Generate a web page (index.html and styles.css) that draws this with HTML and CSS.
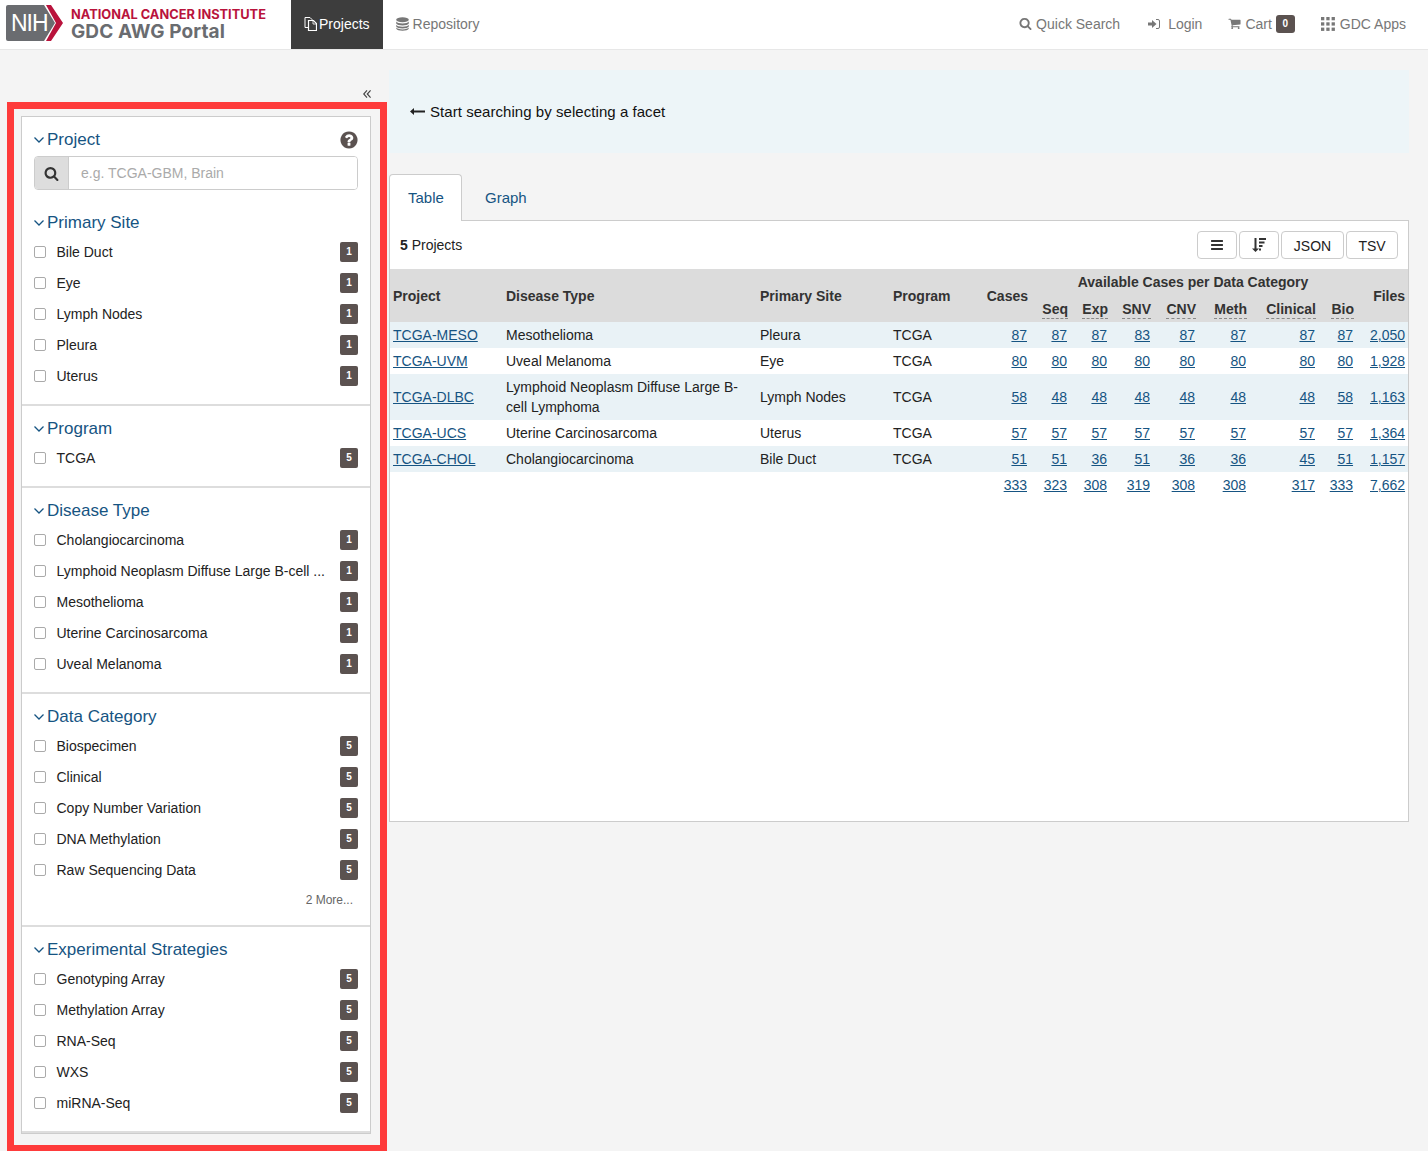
FILE: index.html
```html
<!DOCTYPE html>
<html lang="en">
<head>
  <meta charset="UTF-8">
  <title>GDC AWG Portal</title>
  <link rel="stylesheet" href="styles.css">
</head>
<body>
  <header class="topbar">
    <a class="brand">
      <svg class="brand-mark" viewBox="0 0 58 36" width="58" height="36">
        <path d="M2 0H38L49 18L38 36H2Q0 36 0 34V2Q0 0 2 0Z" fill="#6a6c70"/>
        <path d="M40 0H45L57 18L45 36H40L50 18Z" fill="#b9133c"/>
        <text x="5" y="26" class="brand-nih">NIH</text>
      </svg>
      <span class="brand-text">
        <span class="brand-top">NATIONAL CANCER INSTITUTE</span>
        <span class="brand-bottom">GDC AWG Portal</span>
      </span>
    </a>
    <nav class="nav-left">
      <a class="nav-item active">
        <svg class="icon" viewBox="0 0 13 14" width="13" height="14"><path d="M1 .5H6L8 2.500V3M1 .5V10.500H4" fill="none" stroke="currentColor"/><path d="M4.500 3.500H9.500L12.500 6.500V13.500H4.500Z" fill="none" stroke="currentColor" stroke-width="1.200"/><path d="M9 3.500V7H12.500" fill="none" stroke="currentColor" stroke-width=".8"/></svg>
        Projects
      </a>
      <a class="nav-item">
        <svg class="icon" viewBox="0 0 13 14" width="13" height="14" fill="currentColor"><ellipse cx="6.500" cy="2.800" rx="6.300" ry="2.500"/><path d="M.2 4.500C1 7 12 7 12.800 4.500V6.500C12 9 1 9 .2 6.500Z"/><path d="M.2 7.800C1 10.300 12 10.300 12.800 7.800V9.500C12 12 1 12 .2 9.500Z"/><path d="M.2 10.600C1 13 12 13 12.800 10.600V11.500C12 14.500 1 14.500 .2 11.500Z"/></svg>
        Repository
      </a>
    </nav>
    <nav class="nav-right">
      <a class="nav-link link-search">
        <svg class="icon" viewBox="0 0 1792 1792" width="13" height="13" fill="currentColor"><path d="M1216 832q0-185-131.500-316.500t-316.500-131.500-316.500 131.500-131.500 316.500 131.500 316.500 316.500 131.500 316.500-131.500 131.500-316.500zm512 832q0 52-38 90t-90 38q-54 0-90-38l-343-342q-179 124-399 124-143 0-273.500-55.500t-225-150-150-225-55.500-273.500 55.500-273.500 150-225 225-150 273.500-55.500 273.500 55.500 225 150 150 225 55.500 273.500q0 220-124 399l343 343q37 37 37 90z"/></svg>
        Quick Search
      </a>
      <a class="nav-link link-login">
        <svg class="icon" viewBox="0 0 12 10" width="12" height="10"><path d="M0 3.500H4V1L8.500 5L4 9V6.500H0Z" fill="currentColor"/><path d="M8 .5H10Q11.500 .5 11.500 2V8Q11.500 9.500 10 9.500H8" fill="none" stroke="currentColor"/></svg>
        Login
      </a>
      <a class="nav-link link-cart">
        <svg class="icon" viewBox="0 0 1792 1792" width="13" height="13" fill="currentColor"><path d="M704 1536q0 52-38 90t-90 38-90-38-38-90 38-90 90-38 90 38 38 90zm896 0q0 52-38 90t-90 38-90-38-38-90 38-90 90-38 90 38 38 90zm128-1088v512q0 24-16.500 42.500t-40.500 21.500l-1044 122q13 60 13 70 0 16-24 64h920q26 0 45 19t19 45-19 45-45 19h-1024q-26 0-45-19t-19-45q0-11 8-31.500t16-36 21.500-40 15.500-29.500l-177-823h-204q-26 0-45-19t-19-45 19-45 45-19h256q16 0 28.500 6.500t19.500 15.500 13 24.500 8 26 5.500 29.500 4.500 26h1201q26 0 45 19t19 45z"/></svg>
        Cart <span class="cart-count">0</span>
      </a>
      <a class="nav-link link-apps">
        <svg class="icon" viewBox="0 0 14 14" width="14" height="14" fill="currentColor"><rect width="3.300" height="3.300"/><rect x="5.300" width="3.300" height="3.300"/><rect x="10.600" width="3.300" height="3.300"/><rect y="5.300" width="3.300" height="3.300"/><rect x="5.300" y="5.300" width="3.300" height="3.300"/><rect x="10.600" y="5.300" width="3.300" height="3.300"/><rect y="10.600" width="3.300" height="3.300"/><rect x="5.300" y="10.600" width="3.300" height="3.300"/><rect x="10.600" y="10.600" width="3.300" height="3.300"/></svg>
        GDC Apps
      </a>
    </nav>
  </header>

  <div class="page">
    <aside class="sidebar">
      <div class="collapse-row">
        <svg viewBox="0 0 8 8" width="8" height="8" fill="none" stroke="#444" stroke-width="1.200"><path d="M4 .4L.7 4L4 7.600M7.600 .4L4.300 4L7.600 7.600"/></svg>
      </div>
      <div class="facet-box">
        <div class="facet-panel">
          <section class="facet facet-project">
            <h4 class="facet-title">
              <svg class="chevron" viewBox="0 0 10 6" width="10" height="6"><path d="M.5 .5L5 5L9.500 .5"/></svg>Project
              <svg class="help" viewBox="0 0 1792 1792" width="20" height="20" fill="#5b5250"><path d="M1024 1376v-192q0-14-9-23t-23-9h-192q-14 0-23 9t-9 23v192q0 14 9 23t23 9h192q14 0 23-9t9-23zm256-672q0-88-55.500-163t-138.500-116-170-41q-243 0-371 213-15 24 8 42l132 100q7 6 19 6 16 0 25-12 53-68 86-92 34-24 86-24 48 0 85.500 26t37.500 59q0 38-20 61t-68 45q-63 28-115.500 86.500t-52.500 125.500v36q0 14 9 23t23 9h192q14 0 23-9t9-23q0-19 21.500-49.500t54.500-49.500q32-18 49-28.500t46-35 44.500-48 28-60.500 12.500-81zm384 192q0 209-103 385.500t-279.500 279.500-385.500 103-385.500-103-279.500-279.500-103-385.500 103-385.500 279.500-279.500 385.500-103 385.500 103 279.500 279.500 103 385.500z"/></svg>
            </h4>
            <div class="search-group">
              <span class="search-addon">
                <svg viewBox="0 0 1792 1792" width="15" height="15" fill="#333"><path d="M1216 832q0-185-131.500-316.500t-316.500-131.500-316.500 131.500-131.500 316.500 131.500 316.500 316.500 131.500 316.500-131.500 131.500-316.500zm512 832q0 52-38 90t-90 38q-54 0-90-38l-343-342q-179 124-399 124-143 0-273.500-55.500t-225-150-150-225-55.500-273.500 55.500-273.500 150-225 225-150 273.500-55.500 273.500 55.500 225 150 150 225 55.500 273.500q0 220-124 399l343 343q37 37 37 90z"/></svg>
              </span>
              <input class="search-input" type="text" placeholder="e.g. TCGA-GBM, Brain">
            </div>
          </section>

          <section class="facet facet-first">
            <h4 class="facet-title"><svg class="chevron" viewBox="0 0 10 6" width="10" height="6"><path d="M.5 .5L5 5L9.500 .5"/></svg>Primary Site</h4>
            <label class="term"><input type="checkbox"><span class="term-name">Bile Duct</span><span class="count">1</span></label>
            <label class="term"><input type="checkbox"><span class="term-name">Eye</span><span class="count">1</span></label>
            <label class="term"><input type="checkbox"><span class="term-name">Lymph Nodes</span><span class="count">1</span></label>
            <label class="term"><input type="checkbox"><span class="term-name">Pleura</span><span class="count">1</span></label>
            <label class="term"><input type="checkbox"><span class="term-name">Uterus</span><span class="count">1</span></label>
          </section>

          <section class="facet">
            <h4 class="facet-title"><svg class="chevron" viewBox="0 0 10 6" width="10" height="6"><path d="M.5 .5L5 5L9.500 .5"/></svg>Program</h4>
            <label class="term"><input type="checkbox"><span class="term-name">TCGA</span><span class="count">5</span></label>
          </section>

          <section class="facet">
            <h4 class="facet-title"><svg class="chevron" viewBox="0 0 10 6" width="10" height="6"><path d="M.5 .5L5 5L9.500 .5"/></svg>Disease Type</h4>
            <label class="term"><input type="checkbox"><span class="term-name">Cholangiocarcinoma</span><span class="count">1</span></label>
            <label class="term"><input type="checkbox"><span class="term-name">Lymphoid Neoplasm Diffuse Large B-cell ...</span><span class="count">1</span></label>
            <label class="term"><input type="checkbox"><span class="term-name">Mesothelioma</span><span class="count">1</span></label>
            <label class="term"><input type="checkbox"><span class="term-name">Uterine Carcinosarcoma</span><span class="count">1</span></label>
            <label class="term"><input type="checkbox"><span class="term-name">Uveal Melanoma</span><span class="count">1</span></label>
          </section>

          <section class="facet">
            <h4 class="facet-title"><svg class="chevron" viewBox="0 0 10 6" width="10" height="6"><path d="M.5 .5L5 5L9.500 .5"/></svg>Data Category</h4>
            <label class="term"><input type="checkbox"><span class="term-name">Biospecimen</span><span class="count">5</span></label>
            <label class="term"><input type="checkbox"><span class="term-name">Clinical</span><span class="count">5</span></label>
            <label class="term"><input type="checkbox"><span class="term-name">Copy Number Variation</span><span class="count">5</span></label>
            <label class="term"><input type="checkbox"><span class="term-name">DNA Methylation</span><span class="count">5</span></label>
            <label class="term"><input type="checkbox"><span class="term-name">Raw Sequencing Data</span><span class="count">5</span></label>
            <div class="more">2 More...</div>
          </section>

          <section class="facet">
            <h4 class="facet-title"><svg class="chevron" viewBox="0 0 10 6" width="10" height="6"><path d="M.5 .5L5 5L9.500 .5"/></svg>Experimental Strategies</h4>
            <label class="term"><input type="checkbox"><span class="term-name">Genotyping Array</span><span class="count">5</span></label>
            <label class="term"><input type="checkbox"><span class="term-name">Methylation Array</span><span class="count">5</span></label>
            <label class="term"><input type="checkbox"><span class="term-name">RNA-Seq</span><span class="count">5</span></label>
            <label class="term"><input type="checkbox"><span class="term-name">WXS</span><span class="count">5</span></label>
            <label class="term"><input type="checkbox"><span class="term-name">miRNA-Seq</span><span class="count">5</span></label>
          </section>
        </div>
      </div>
    </aside>

    <main class="content">
      <div class="notice">
        <svg viewBox="0 0 15 7" width="15" height="7"><path d="M4 0V2.500H15V4.500H4V7L0 3.500Z" fill="#222"/></svg>
        Start searching by selecting a facet
      </div>

      <div class="tabs">
        <a class="tab active">Table</a>
        <a class="tab">Graph</a>
      </div>

      <div class="tab-pane">
        <div class="toolbar">
          <span class="total"><strong>5</strong> Projects</span>
          <div class="tool-buttons">
            <button class="btn btn-icon">
              <svg viewBox="0 0 1792 1792" width="14" height="14" fill="#333"><path d="M1664 1344v128q0 26-19 45t-45 19h-1408q-26 0-45-19t-19-45v-128q0-26 19-45t45-19h1408q26 0 45 19t19 45zm0-512v128q0 26-19 45t-45 19h-1408q-26 0-45-19t-19-45v-128q0-26 19-45t45-19h1408q26 0 45 19t19 45zm0-512v128q0 26-19 45t-45 19h-1408q-26 0-45-19t-19-45v-128q0-26 19-45t45-19h1408q26 0 45 19t19 45z"/></svg>
            </button>
            <button class="btn btn-icon">
              <svg viewBox="0 0 14 14" width="14" height="14" fill="#333"><path d="M2.500 0H4.500V10.500H7L3.500 14L0 10.500H2.500Z"/><rect x="7" width="7" height="2"/><rect x="7" y="3.500" width="5.500" height="2"/><rect x="7" y="7" width="3.500" height="2"/><rect x="7" y="10.500" width="2" height="2"/></svg>
            </button>
            <button class="btn btn-json">JSON</button>
            <button class="btn btn-tsv">TSV</button>
          </div>
        </div>

        <table class="projects">
          <colgroup>
            <col class="c-project"><col class="c-disease"><col class="c-site"><col class="c-program"><col class="c-cases">
            <col class="c-seq"><col class="c-exp"><col class="c-snv"><col class="c-cnv"><col class="c-meth"><col class="c-clinical"><col class="c-bio"><col class="c-files">
          </colgroup>
          <thead>
            <tr class="head-top">
              <th rowspan="2">Project</th>
              <th rowspan="2">Disease Type</th>
              <th rowspan="2">Primary Site</th>
              <th rowspan="2">Program</th>
              <th rowspan="2" class="num">Cases</th>
              <th colspan="7" class="group">Available Cases per Data Category</th>
              <th rowspan="2" class="num">Files</th>
            </tr>
            <tr class="head-sub">
              <th class="num"><span>Seq</span></th>
              <th class="num"><span>Exp</span></th>
              <th class="num"><span>SNV</span></th>
              <th class="num"><span>CNV</span></th>
              <th class="num"><span>Meth</span></th>
              <th class="num"><span>Clinical</span></th>
              <th class="num"><span>Bio</span></th>
            </tr>
          </thead>
          <tbody>
            <tr class="odd">
              <td><a>TCGA-MESO</a></td><td>Mesothelioma</td><td>Pleura</td><td>TCGA</td>
              <td class="num"><a>87</a></td><td class="num"><a>87</a></td><td class="num"><a>87</a></td><td class="num"><a>83</a></td><td class="num"><a>87</a></td><td class="num"><a>87</a></td><td class="num"><a>87</a></td><td class="num"><a>87</a></td><td class="num"><a>2,050</a></td>
            </tr>
            <tr>
              <td><a>TCGA-UVM</a></td><td>Uveal Melanoma</td><td>Eye</td><td>TCGA</td>
              <td class="num"><a>80</a></td><td class="num"><a>80</a></td><td class="num"><a>80</a></td><td class="num"><a>80</a></td><td class="num"><a>80</a></td><td class="num"><a>80</a></td><td class="num"><a>80</a></td><td class="num"><a>80</a></td><td class="num"><a>1,928</a></td>
            </tr>
            <tr class="odd">
              <td><a>TCGA-DLBC</a></td><td>Lymphoid Neoplasm Diffuse Large B-cell Lymphoma</td><td>Lymph Nodes</td><td>TCGA</td>
              <td class="num"><a>58</a></td><td class="num"><a>48</a></td><td class="num"><a>48</a></td><td class="num"><a>48</a></td><td class="num"><a>48</a></td><td class="num"><a>48</a></td><td class="num"><a>48</a></td><td class="num"><a>58</a></td><td class="num"><a>1,163</a></td>
            </tr>
            <tr>
              <td><a>TCGA-UCS</a></td><td>Uterine Carcinosarcoma</td><td>Uterus</td><td>TCGA</td>
              <td class="num"><a>57</a></td><td class="num"><a>57</a></td><td class="num"><a>57</a></td><td class="num"><a>57</a></td><td class="num"><a>57</a></td><td class="num"><a>57</a></td><td class="num"><a>57</a></td><td class="num"><a>57</a></td><td class="num"><a>1,364</a></td>
            </tr>
            <tr class="odd">
              <td><a>TCGA-CHOL</a></td><td>Cholangiocarcinoma</td><td>Bile Duct</td><td>TCGA</td>
              <td class="num"><a>51</a></td><td class="num"><a>51</a></td><td class="num"><a>36</a></td><td class="num"><a>51</a></td><td class="num"><a>36</a></td><td class="num"><a>36</a></td><td class="num"><a>45</a></td><td class="num"><a>51</a></td><td class="num"><a>1,157</a></td>
            </tr>
            <tr>
              <td colspan="4"></td>
              <td class="num"><a>333</a></td><td class="num"><a>323</a></td><td class="num"><a>308</a></td><td class="num"><a>319</a></td><td class="num"><a>308</a></td><td class="num"><a>308</a></td><td class="num"><a>317</a></td><td class="num"><a>333</a></td><td class="num"><a>7,662</a></td>
            </tr>
          </tbody>
        </table>
      </div>
    </main>
  </div>
</body>
</html>
```

FILE: styles.css
```css
* { box-sizing: border-box; }
html, body { margin: 0; padding: 0; }
body { background: #f4f4f4; color: #222; font-family: "Liberation Sans", Arial, sans-serif; font-size: 14px; line-height: 20px; overflow-x: hidden; }

/* top bar */
.topbar { display: flex; align-items: stretch; height: 50px; background: #fff; border-bottom: 1px solid #e7e7e7; }
.brand { display: flex; width: 291px; padding: 5px 0 0 6px; }
.brand-mark { flex: none; }
.brand-nih { font-family: "Liberation Sans", Arial, sans-serif; font-size: 23px; fill: #fff; letter-spacing: -1px; }
.brand-text { display: flex; flex-direction: column; margin-left: 7px; }
.brand-top { font-family: Inter, sans-serif; font-weight: 700; font-size: 12.800px; line-height: 12px; margin-top: 4px; color: #b9133c; white-space: nowrap; }
.brand-bottom { font-family: Inter, sans-serif; font-weight: 700; font-size: 19px; line-height: 22px; letter-spacing: .1px; color: #6a6c70; white-space: nowrap; }
.nav-left { display: flex; height: 49px; }
.nav-item { display: flex; align-items: center; gap: 4px; padding: 0 13px 2px; color: #777; }
.nav-item.active { gap: 2px; background: #3d3d3d; color: #fff; }
.nav-right { display: flex; align-items: center; margin-left: auto; padding: 0 22px 2px 0; color: #777; }
.nav-link { display: flex; align-items: center; }
.link-search { gap: 4px; margin-right: 28px; }
.link-login { gap: 8px; margin-right: 26px; }
.link-cart { gap: 4px; margin-right: 26px; }
.link-apps { gap: 5px; }
.cart-count { width: 19px; height: 18px; background: #5b5250; color: #fff; border-radius: 3px; font-size: 10px; font-weight: 700; line-height: 18px; text-align: center; }

/* sidebar */
.page { display: flex; align-items: flex-start; padding-left: 7px; }
.sidebar { width: 380px; flex: none; }
.collapse-row { display: flex; justify-content: flex-end; height: 52px; padding: 40px 16px 0 0; }
.facet-box { height: 1049px; overflow: hidden; border: 7px solid #fe3b3b; border-bottom-width: 6px; padding: 7px 9px 0 7px; }
.facet-panel { background: #fff; border: 1px solid #ccc; }
.facet { padding: 13px 12px 13px 12px; border-bottom: 2px solid #ddd; }
.facet-project { border-bottom: 0; padding-bottom: 0; }
.facet-first { padding-top: 23px; }
.facet-title { display: flex; align-items: center; margin: 0 0 3px; font-size: 17px; font-weight: 400; line-height: 20px; color: #165482; }
.facet-project .facet-title { margin-bottom: 6px; }
.chevron { flex: none; margin-right: 3px; fill: none; stroke: #165482; stroke-width: 1.300; }
.help { margin-left: auto; margin-right: -1px; }
.search-group { display: flex; height: 34px; border: 1px solid #ccc; border-radius: 4px; overflow: hidden; }
.search-addon { display: flex; align-items: center; justify-content: center; width: 34px; background: #ddd; border-right: 1px solid #ccc; }
.search-input { flex: 1; min-width: 0; border: 0; padding: 0 12px; font: inherit; }
.search-input::placeholder { color: #aaa; }
.term { display: flex; align-items: center; height: 31px; }
.term input { appearance: none; flex: none; width: 12px; height: 12px; margin: 0 10.500px 0 0; background: #fff; border: 1px solid #aaa; border-radius: 2px; }
.term-name { flex: 1; min-width: 0; white-space: nowrap; color: #222; }
.count { flex: none; width: 18px; height: 20px; background: #5b5250; color: #fff; border-radius: 2px; font-size: 10px; font-weight: 700; line-height: 20px; text-align: center; }
.more { height: 27px; padding-right: 5px; font-size: 12px; line-height: 31px; text-align: right; color: #666; }

/* content */
.content { width: 1020px; margin-left: 2px; padding-top: 20px; flex: none; }
.notice { display: flex; align-items: center; gap: 5px; height: 83px; padding-left: 21px; background: #edf5f8; color: #111; font-size: 15px; letter-spacing: .05px; }
.tabs { display: flex; margin-top: 21px; height: 47px; }
.tab { padding: 14px 18px 0; width: 73px; color: #165482; font-size: 15px; position: relative; }
.tab.active { background: #fff; border: 1px solid #ccc; border-bottom: 0; border-radius: 4px 4px 0 0; height: 47px; z-index: 1; padding-top: 13px; }
.tab + .tab { padding-left: 23px; width: auto; }
.tab-pane { height: 602px; margin-top: -1px; background: #fff; border: 1px solid #ccc; }
.toolbar { display: flex; align-items: center; justify-content: space-between; height: 48px; padding: 0 10px; }
.tool-buttons { display: flex; gap: 2px; }
.btn { height: 28px; padding: 0; background: #fff; border: 1px solid #ccc; border-radius: 4px; font: inherit; color: #222; display: flex; align-items: center; justify-content: center; }
.btn-icon { width: 40px; }
.btn-json { width: 63px; padding-top: 1px; }
.btn-tsv { width: 52px; padding-top: 1px; }

/* table */
.projects { width: 1018px; table-layout: fixed; border-collapse: collapse; }
.c-project { width: 113px; }
.c-disease { width: 254px; }
.c-site { width: 133px; }
.c-program { width: 93px; }
.c-cases { width: 48px; }
.c-seq, .c-exp { width: 40px; }
.c-snv { width: 43px; }
.c-cnv { width: 45px; }
.c-meth { width: 51px; }
.c-clinical { width: 69px; }
.c-bio { width: 38px; }
.c-files { width: 51px; }
.projects th { padding: 0 3px; background: #dcdcdc; text-align: left; font-weight: 700; color: #333; }
.projects th.num { text-align: right; }
.projects td.num { text-align: right; padding-right: 4px; }
.projects tr > td.num:last-child { padding-right: 3px; }
.projects th.group { height: 26px; padding-right: 5px; text-align: center; }
.head-sub th { height: 27px; vertical-align: top; padding-top: 4px; }
.head-sub span { display: inline-block; line-height: 18px; border-bottom: 1px dashed #888; }
.projects td { height: 26px; padding: 3px; }
.projects tr.odd td { background: #e9f2f6; }
.projects a { color: #165482; text-decoration: underline; }
```
